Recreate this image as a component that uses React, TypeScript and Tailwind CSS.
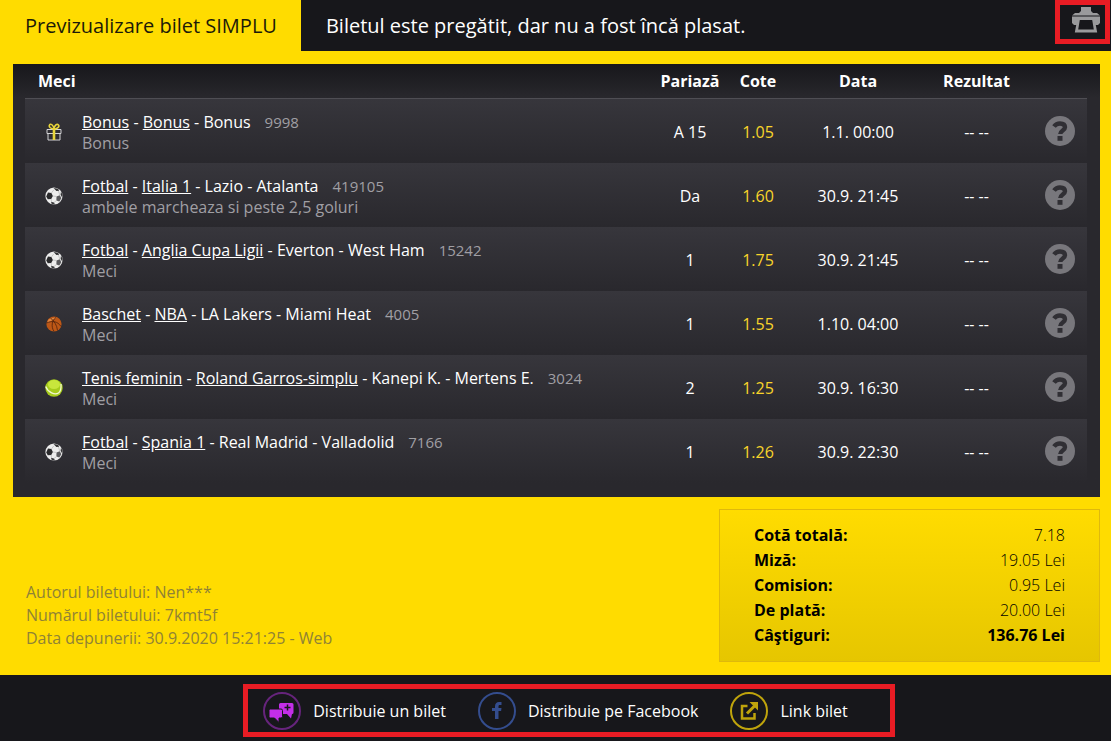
import type { ReactNode } from "react";

type Sport = "bonus" | "football" | "basketball" | "tennis";

interface Bet {
  sport: Sport;
  category: string;
  league: string;
  match: string;
  code: string;
  market: string;
  pick: string;
  odds: string;
  date: string;
}

const BETS: Bet[] = [
  { sport: "bonus", category: "Bonus", league: "Bonus", match: "Bonus", code: "9998", market: "Bonus", pick: "A 15", odds: "1.05", date: "1.1. 00:00" },
  { sport: "football", category: "Fotbal", league: "Italia 1", match: "Lazio - Atalanta", code: "419105", market: "ambele marcheaza si peste 2,5 goluri", pick: "Da", odds: "1.60", date: "30.9. 21:45" },
  { sport: "football", category: "Fotbal", league: "Anglia Cupa Ligii", match: "Everton - West Ham", code: "15242", market: "Meci", pick: "1", odds: "1.75", date: "30.9. 21:45" },
  { sport: "basketball", category: "Baschet", league: "NBA", match: "LA Lakers - Miami Heat", code: "4005", market: "Meci", pick: "1", odds: "1.55", date: "1.10. 04:00" },
  { sport: "tennis", category: "Tenis feminin", league: "Roland Garros-simplu", match: "Kanepi K. - Mertens E.", code: "3024", market: "Meci", pick: "2", odds: "1.25", date: "30.9. 16:30" },
  { sport: "football", category: "Fotbal", league: "Spania 1", match: "Real Madrid - Valladolid", code: "7166", market: "Meci", pick: "1", odds: "1.26", date: "30.9. 22:30" },
];

const TOTALS = [
  { label: "Cotă totală:", value: "7.18" },
  { label: "Miză:", value: "19.05 Lei" },
  { label: "Comision:", value: "0.95 Lei" },
  { label: "De plată:", value: "20.00 Lei" },
  { label: "Câştiguri:", value: "136.76 Lei", strong: true },
];

function SportIcon({ sport }: { sport: Sport }) {
  if (sport === "bonus") {
    return (
      <svg width="18" height="18" viewBox="0 0 18 18" fill="none" aria-hidden="true">
        <path d="M2 6.5h14v4H2zM3 10.5h12v6.500H3z" stroke="#d4d4d6" strokeWidth="1" />
        <path d="M9 6v11" stroke="#e8d53a" strokeWidth="2.6" />
        <path d="M9 6C6 6 3.500 4 4.500 2S8.500 2 9 6C9.500 2 12 .5 13.500 2S12 6 9 6" stroke="#e8d53a" strokeWidth="1.600" />
      </svg>
    );
  }
  if (sport === "football") {
    return (
      <svg width="18" height="18" viewBox="0 0 18 18" aria-hidden="true">
        <circle cx="9" cy="9" r="8.600" fill="#ededed" />
        <path d="M3 5.500l3.400.5 1.500 3-1.700 3-3.400.2L1.200 9.500z" fill="#2a2a2c" />
        <path d="M8.500 1l4.500.8 1.200 2-2.800.2zM16 4.500l1.500 3.500-.3 2.500-1.600-2.700z" fill="#333335" />
        <path d="M11.500 9.500l3.300-1.200 1.500 3-2 3.200-2.900-.9z" fill="#5a5a5d" />
        <path d="M6 14.800l3 .7 1 1.900-3.300-.3z" fill="#39393b" />
        <path d="M6.400 6l2.300-3M7.900 9l3.600.5M14.800 8.300L13.500 4M11.400 13.600L9 15.500M6.200 12l.3 2.800" stroke="#b4b4b6" strokeWidth=".7" fill="none" />
      </svg>
    );
  }
  if (sport === "basketball") {
    return (
      <svg width="16" height="16" viewBox="0 0 16 16" aria-hidden="true">
        <circle cx="8" cy="8" r="7.600" fill="#bd5716" />
        <path d="M2.500 3.500Q7 1 11 1.500 7 4 1 7z" fill="#df8742" />
        <path d="M.6 7C6 4.500 11.500 5 15 10.500M4.500 2C8 5 11 9 11.500 14.500M10.500.9C5.500 4.500 5 11 8 15.300" stroke="#4d210c" strokeWidth=".8" fill="none" />
      </svg>
    );
  }
  return (
    <svg width="18" height="18" viewBox="0 0 18 18" aria-hidden="true">
      <circle cx="9" cy="9" r="8.700" fill="#a6cc1c" />
      <ellipse cx="9" cy="5.500" rx="6" ry="4.500" fill="#c8e63c" />
      <path d="M.7 7.500C3 13.500 10 16.500 13.500 14c2.300-1.700 2.800-5 2.500-9" stroke="#f2f8cf" strokeWidth="1.300" fill="none" />
    </svg>
  );
}

function PrinterIcon() {
  return (
    <svg width="28" height="26" viewBox="0 0 28 26" fill="#9a9a9c" aria-hidden="true">
      <path d="M9 0h10v4l2 2H7l2-2z" />
      <path d="M3 6h22l3 2.500H0z" />
      <path fillRule="evenodd" d="M0 9.500h28V16l-2 2h-2.200l1.400 7.500H2.800L4.200 18H2l-2-2zM7.800 13L6.200 22.500h15.600L20.200 13z" />
    </svg>
  );
}

function ShareIcon() {
  return (
    <svg width="38" height="38" viewBox="0 0 38 38" fill="none" aria-hidden="true">
      <circle cx="19" cy="19" r="18" stroke="#66247c" strokeWidth="2" />
      <path d="M17.500 11H29a1.500 1.500 0 0 1 1.500 1.500v8A1.500 1.500 0 0 1 29 22l-1 4.500L24 22h-6.500a1.500 1.500 0 0 1-1.500-1.500v-8a1.500 1.500 0 0 1 1.500-1.500z" fill="#c42ee8" />
      <path d="M7.500 17H18a1.500 1.500 0 0 1 1.500 1.500v6A1.500 1.500 0 0 1 18 26h-2v4.500L11.500 26h-4A1.500 1.500 0 0 1 6 24.500v-6A1.500 1.500 0 0 1 7.500 17z" fill="#c42ee8" stroke="#17171b" strokeWidth="1" />
      <path d="M24.500 12.500v6M21.500 15.500h6" stroke="#17171b" strokeWidth="1.500" />
    </svg>
  );
}

function FacebookIcon() {
  return (
    <svg width="38" height="38" viewBox="0 0 38 38" fill="none" aria-hidden="true">
      <circle cx="19" cy="19" r="18" stroke="#344d8e" strokeWidth="2" />
      <path d="M17 27v-8h-3v-3h3v-1.500c0-3 1.500-4.500 4-4.500h2.500v3h-1.700c-1 0-1.300.5-1.300 1.500V16h3l-.4 3h-2.600v8z" fill="#344d8e" />
    </svg>
  );
}

function LinkIcon() {
  return (
    <svg width="38" height="38" viewBox="0 0 38 38" fill="none" stroke="#bfa40c" strokeWidth="2" aria-hidden="true">
      <circle cx="19" cy="19" r="18" />
      <path d="M17.500 14h-5.500v12.500h12.500V21" strokeWidth="2.500" />
      <path d="M17 21.500l8-8" strokeWidth="3" />
      <path d="M19.500 10H28v8.500z" fill="#bfa40c" stroke="none" />
    </svg>
  );
}

function BetRow({ bet }: { bet: Bet }) {
  return (
    <tr className="h-16 bg-linear-to-b from-[#37363c] to-[#29282d]">
      <td className="pt-0.5">
        <div className="flex justify-center">
          <SportIcon sport={bet.sport} />
        </div>
      </td>
      <td className="pt-1 leading-[21px]">
        <div>
          <a href="#" className="underline">{bet.category}</a>
          {" - "}
          <a href="#" className="underline">{bet.league}</a>
          {" - "}
          {bet.match}
          <span className="ml-3.5 text-[15px] text-[#a09fa4]">{bet.code}</span>
        </div>
        <div className="text-[#a09fa4]">{bet.market}</div>
      </td>
      <td className="pt-0.5 text-center">{bet.pick}</td>
      <td className="pt-0.5 text-center text-[#f8d42a]">{bet.odds}</td>
      <td className="pt-0.5 text-center">{bet.date}</td>
      <td className="pt-0.5 text-center">-- --</td>
      <td className="pl-1">
        <button type="button" aria-label="Detalii" className="mx-auto block">
          <svg width="30" height="30" viewBox="0 0 30 30" className="block" aria-hidden="true">
            <circle cx="15" cy="15" r="15" fill="#78777c" />
            <path d="M9 10.500C10.500 8.500 12.500 7.500 15 7.500c3 0 5 1.300 5 3.800 0 3.200-4.700 3.200-4.700 6.700" stroke="#302f34" strokeWidth="4.400" fill="none" />
            <path d="M12.500 20h5v4.800h-5z" fill="#302f34" />
          </svg>
        </button>
      </td>
    </tr>
  );
}

function ShareLink({ icon, children }: { icon: ReactNode; children: ReactNode }) {
  return (
    <a href="#" className="flex items-center gap-3">
      {icon}
      {children}
    </a>
  );
}

export default function App() {
  return (
    <div className="flex min-h-screen flex-col bg-[#17171b] font-['Open_Sans',sans-serif] text-base text-white">
      <header className="flex h-[51px] text-xl">
        <h1 className="flex items-center bg-[#ffdc00] pr-6 pl-[25px] text-[#1c1a08]">Previzualizare bilet SIMPLU</h1>
        <p className="flex flex-1 items-center px-[25px]">Biletul este pregătit, dar nu a fost încă plasat.</p>
        <button
          type="button"
          aria-label="Tipărește"
          className="mr-px flex h-11 w-[55px] items-center justify-center border-5 border-[#e81c24] pb-1 pl-1.5"
        >
          <PrinterIcon />
        </button>
      </header>

      <main className="bg-[#ffdc00] pt-[13px] pr-[11px] pb-[13px] pl-[13px]">
        <section className="bg-[#29282d] bg-linear-to-b from-[#17171b] to-[#29282d] to-[34px] pr-[13px] pb-[14px] pl-3">
          <table className="w-full table-fixed border-separate border-spacing-0">
            <colgroup>
              <col className="w-[57px]" />
              <col />
              <col className="w-[68px]" />
              <col className="w-[68px]" />
              <col className="w-[132px]" />
              <col className="w-[105px]" />
              <col className="w-[58px]" />
            </colgroup>
            <thead>
              <tr className="h-[35px] *:border-b *:border-[#4f4e54]">
                <th colSpan={2} className="pl-[13px] text-left">Meci</th>
                <th>Pariază</th>
                <th>Cote</th>
                <th>Data</th>
                <th>Rezultat</th>
                <td />
              </tr>
            </thead>
            <tbody>
              {BETS.map((bet) => (
                <BetRow key={bet.code} bet={bet} />
              ))}
            </tbody>
          </table>
        </section>

        <section className="mt-3 flex items-end justify-between">
          <div className="pb-3 pl-[13px] leading-[23px] text-[#8f8236]">
            <p>Autorul biletului: Nen***</p>
            <p>Numărul biletului: 7kmt5f</p>
            <p>Data depunerii: 30.9.2020 15:21:25 - Web</p>
          </div>
          <dl className="w-[381px] border border-[#dfb90c] bg-linear-to-b from-[#ffdc00] to-[#e6c600] px-[34px] py-[13px] leading-[25px] text-black">
            {TOTALS.map((row) => (
              <div key={row.label} className="flex justify-between">
                <dt className="font-bold">{row.label}</dt>
                <dd className={row.strong ? "font-bold" : "font-light"}>{row.value}</dd>
              </div>
            ))}
          </dl>
        </section>
      </main>

      <footer className="flex justify-center py-[9px] pl-[27px]">
        <nav className="flex h-[53px] items-center gap-8 border-5 border-[#e81c24] pr-[42px] pl-[15px]">
          <ShareLink icon={<ShareIcon />}>Distribuie un bilet</ShareLink>
          <ShareLink icon={<FacebookIcon />}>Distribuie pe Facebook</ShareLink>
          <ShareLink icon={<LinkIcon />}>Link bilet</ShareLink>
        </nav>
      </footer>
    </div>
  );
}
